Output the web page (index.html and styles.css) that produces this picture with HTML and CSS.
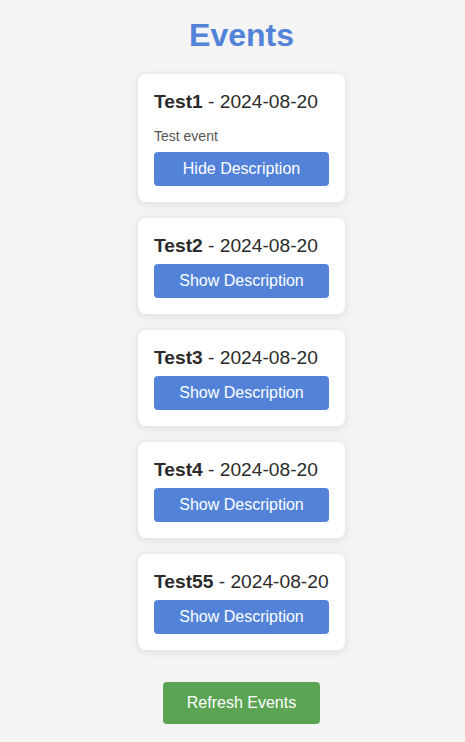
FILE: index.html
```html
<!DOCTYPE html>
<html lang="en">
<head>
<meta charset="utf-8">
<title>Events</title>
<link rel="stylesheet" href="styles.css">
</head>
<body>
<main class="page">
  <h1 class="title">Events</h1>
  <ul class="event-list">
    <li class="card">
      <h3 class="card-title"><strong>Test1</strong> - 2024-08-20</h3>
      <p class="card-desc">Test event</p>
      <button class="btn btn-blue" type="button">Hide Description</button>
    </li>
    <li class="card">
      <h3 class="card-title"><strong>Test2</strong> - 2024-08-20</h3>
      <button class="btn btn-blue" type="button">Show Description</button>
    </li>
    <li class="card">
      <h3 class="card-title"><strong>Test3</strong> - 2024-08-20</h3>
      <button class="btn btn-blue" type="button">Show Description</button>
    </li>
    <li class="card">
      <h3 class="card-title"><strong>Test4</strong> - 2024-08-20</h3>
      <button class="btn btn-blue" type="button">Show Description</button>
    </li>
    <li class="card">
      <h3 class="card-title"><strong>Test55</strong> - 2024-08-20</h3>
      <button class="btn btn-blue" type="button">Show Description</button>
    </li>
  </ul>
  <button class="btn btn-green" type="button">Refresh Events</button>
</main>
</body>
</html>
```

FILE: styles.css
```css
* {
  box-sizing: border-box;
}

html, body {
  margin: 0;
  background: #f4f4f4;
}

body {
  font-family: "Liberation Sans", Arial, sans-serif;
  color: #333;
}

.page {
  display: flex;
  flex-direction: column;
  align-items: center;
  padding: 17px 0 20px 18px;
}

.title {
  margin: 0 0 20px;
  font-size: 32px;
  line-height: 37px;
  font-weight: bold;
  color: #5283d9;
}

.event-list {
  list-style: none;
  margin: 0;
  padding: 0;
  display: flex;
  flex-direction: column;
  gap: 16px;
}

.card {
  width: 207px;
  padding: 16px;
  background: #fff;
  border-radius: 8px;
  box-shadow: 0 2px 8px rgba(0, 0, 0, 0.1);
}

.card-title {
  margin: 0 0 7px;
  font-size: 19.2px;
  line-height: 23px;
  font-weight: normal;
  color: #2b2b2b;
  white-space: nowrap;
}

.card-title strong {
  font-weight: bold;
}

.card-desc {
  margin: 15px 0 8px;
  font-size: 14px;
  line-height: 16px;
  color: #555;
}

.btn {
  display: block;
  border: none;
  border-radius: 4px;
  color: #fff;
  font-family: "Liberation Sans", Arial, sans-serif;
  font-size: 16px;
  line-height: 18px;
  cursor: pointer;
}

.btn-blue {
  width: 100%;
  padding: 8px 0;
  background: #5283d9;
}

.btn-green {
  margin-top: 32px;
  padding: 12px 24px;
  background: #5aa454;
}
```
